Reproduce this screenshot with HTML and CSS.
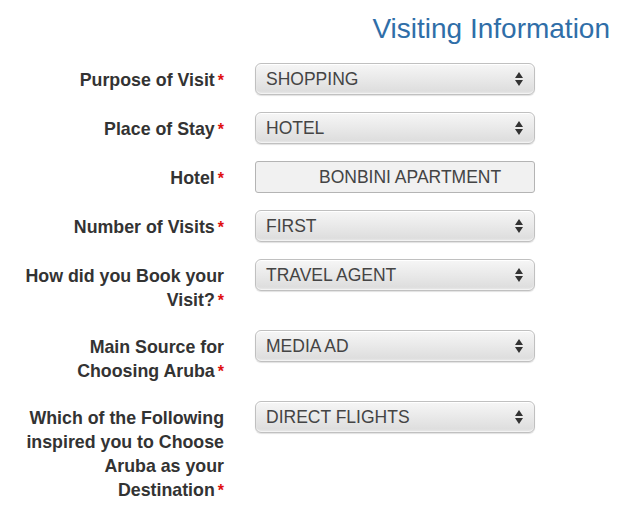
FILE: index.html
```html
<!DOCTYPE html>
<html>
<head>
<meta charset="utf-8">
<link rel="stylesheet" href="styles.css">
</head>
<body>
<div class="page">
  <h2 class="title">Visiting Information</h2>
  <div class="form">
    <div class="row">
      <label class="label">Purpose of Visit<span class="req">*</span></label>
      <div class="select"><span>SHOPPING</span><svg class="arrows" width="10" height="16" viewBox="0 0 10 16"><path d="M5 1 L9 7 L1 7 Z M1 9 L9 9 L5 15 Z" fill="#333"/></svg></div>
    </div>
    <div class="row">
      <label class="label">Place of Stay<span class="req">*</span></label>
      <div class="select"><span>HOTEL</span><svg class="arrows" width="10" height="16" viewBox="0 0 10 16"><path d="M5 1 L9 7 L1 7 Z M1 9 L9 9 L5 15 Z" fill="#333"/></svg></div>
    </div>
    <div class="row">
      <label class="label">Hotel<span class="req">*</span></label>
      <div class="input">BONBINI APARTMENT</div>
    </div>
    <div class="row">
      <label class="label">Number of Visits<span class="req">*</span></label>
      <div class="select"><span>FIRST</span><svg class="arrows" width="10" height="16" viewBox="0 0 10 16"><path d="M5 1 L9 7 L1 7 Z M1 9 L9 9 L5 15 Z" fill="#333"/></svg></div>
    </div>
    <div class="row">
      <label class="label"><span class="line">How did you Book your</span><span class="line">Visit?<span class="req">*</span></span></label>
      <div class="select"><span>TRAVEL AGENT</span><svg class="arrows" width="10" height="16" viewBox="0 0 10 16"><path d="M5 1 L9 7 L1 7 Z M1 9 L9 9 L5 15 Z" fill="#333"/></svg></div>
    </div>
    <div class="row">
      <label class="label"><span class="line">Main Source for</span><span class="line">Choosing Aruba<span class="req">*</span></span></label>
      <div class="select"><span>MEDIA AD</span><svg class="arrows" width="10" height="16" viewBox="0 0 10 16"><path d="M5 1 L9 7 L1 7 Z M1 9 L9 9 L5 15 Z" fill="#333"/></svg></div>
    </div>
    <div class="row">
      <label class="label"><span class="line">Which of the Following</span><span class="line">inspired you to Choose</span><span class="line">Aruba as your</span><span class="line">Destination<span class="req">*</span></span></label>
      <div class="select"><span>DIRECT FLIGHTS</span><svg class="arrows" width="10" height="16" viewBox="0 0 10 16"><path d="M5 1 L9 7 L1 7 Z M1 9 L9 9 L5 15 Z" fill="#333"/></svg></div>
    </div>
  </div>
</div>
</body>
</html>
```

FILE: styles.css
```css
html, body {
  margin: 0;
  padding: 0;
  background: #ffffff;
}
.page {
  width: 618px;
  font-family: "Liberation Sans", Arial, sans-serif;
}
.title {
  margin: 13px 8px 0 0;
  text-align: right;
  font-size: 28px;
  line-height: 32px;
  font-weight: normal;
  color: #2f6ea8;
}
.form {
  margin-top: 18px;
  padding-left: 20px;
}
.row {
  display: grid;
  grid-template-columns: 204px 280px;
  column-gap: 31px;
  align-items: start;
  margin-bottom: 17px;
}
.label {
  display: block;
  padding-top: 5px;
  text-align: right;
  font-size: 17.8px;
  line-height: 24px;
  font-weight: bold;
  color: #333333;
  white-space: nowrap;
}
.line {
  display: block;
}
.req {
  color: #e01010;
  margin-left: 3px;
  font-size: 16px;
}
.select {
  box-sizing: border-box;
  height: 32px;
  display: flex;
  align-items: center;
  justify-content: space-between;
  padding: 0 10px 0 10px;
  border: 1px solid #c0c0c0;
  border-radius: 6px;
  background: linear-gradient(#f6f6f6 0%, #e9e9e9 50%, #dedede 90%, #e8e8e8 100%);
  box-shadow: inset 0 1px 0 #ffffff, inset 0 -1px 1px #f4f4f4, 0 1px 1px #e2e2e2;
  font-size: 17.5px;
  color: #444444;
}
.arrows {
  flex: none;
}
.input {
  box-sizing: border-box;
  height: 32px;
  display: flex;
  align-items: center;
  padding-left: 63px;
  border: 1px solid #b4b4b4;
  border-radius: 3px;
  background: #f1f1f1;
  font-size: 17.5px;
  color: #444444;
}
```
